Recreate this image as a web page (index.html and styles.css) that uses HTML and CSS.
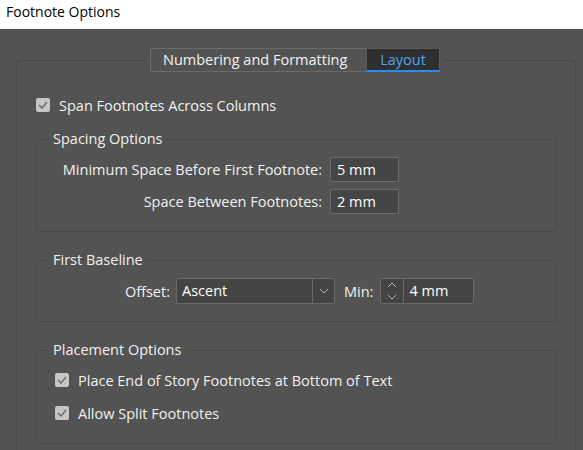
FILE: index.html
```html
<!DOCTYPE html>
<html lang="en">

<head>
  <meta charset="UTF-8">
  <meta name="viewport" content="width=device-width, initial-scale=1">
  <title>Footnote Options</title>
  <link rel="stylesheet" href="styles.css">
</head>

<body>

  <div class="titlebar">Footnote Options</div>

  <div class="dialog">
    <fieldset class="panel">
      <legend class="tabs">
        <span class="tab">Numbering and Formatting</span>
        <span class="tab active">Layout</span>
      </legend>

      <label class="check">
        <span class="box">
          <svg width="10" height="8" viewBox="0 0 10 8"><polyline points="1,4 4,7 9,1" /></svg>
        </span>
        Span Footnotes Across Columns
      </label>

      <!-- Spacing -->
      <fieldset class="group spacing">
        <legend>Spacing Options</legend>
        <div class="form-grid">
          <span class="lbl">Minimum Space Before First Footnote:</span>
          <span class="field">5 mm</span>
          <span class="lbl">Space Between Footnotes:</span>
          <span class="field">2 mm</span>
        </div>
      </fieldset>

      <!-- First baseline -->
      <fieldset class="group baseline">
        <legend>First Baseline</legend>
        <div class="offset-row">
          <span class="lbl offset-lbl">Offset:</span>
          <span class="select">
            <span class="select-value">Ascent</span>
            <span class="select-arrow">
              <svg width="10" height="6" viewBox="0 0 10 6"><polyline points="1,1 5,5 9,1" /></svg>
            </span>
          </span>
          <span class="lbl min-lbl">Min:</span>
          <span class="spin">
            <span class="spin-btns">
              <svg width="10" height="18" viewBox="0 0 10 18"><polyline points="1,5 5,1 9,5" /><polyline points="1,13 5,17 9,13" /></svg>
            </span>
            <span class="spin-value">4 mm</span>
          </span>
        </div>
      </fieldset>

      <!-- Placement -->
      <fieldset class="group placement">
        <legend>Placement Options</legend>
        <div class="check-list">
          <label class="check">
            <span class="box">
              <svg width="10" height="8" viewBox="0 0 10 8"><polyline points="1,4 4,7 9,1" /></svg>
            </span>
            Place End of Story Footnotes at Bottom of Text
          </label>
          <label class="check">
            <span class="box">
              <svg width="10" height="8" viewBox="0 0 10 8"><polyline points="1,4 4,7 9,1" /></svg>
            </span>
            Allow Split Footnotes
          </label>
        </div>
      </fieldset>
    </fieldset>
  </div>

</body>

</html>
```

FILE: styles.css
```css
* {
  box-sizing: border-box;
}

body {
  margin: 0;
  font-family: 'Open Sans', 'Noto Sans', sans-serif;
  font-size: 14.5px;
  color: #f0f0f0;
  background-color: #535353;
  height: 450px;
  overflow: hidden;
}

.titlebar {
  height: 29px;
  background-color: #ffffff;
  color: #000;
  padding: 0 6px;
  line-height: 24px;
  font-size: 14px;
}

.dialog {
  height: 421px;
  background-color: #535353;
  padding-top: 19px;
  overflow: hidden;
}

/* Outer panel with tabs */
.panel {
  margin: 0 7px 0 16px;
  padding: 23px 18px 40px 19px;
  border: 1px solid #484848;
  border-radius: 3px;
  min-width: 0;
}

.tabs {
  margin: 0 0 0 110px;
  padding: 0 4px;
  display: flex;
}

.tab {
  height: 24px;
  line-height: 22px;
  border: 1px solid #6a6a6a;
  color: #f2f2f2;
}

.tab:first-child {
  width: 216px;
  padding-left: 12px;
  border-right: none;
  border-radius: 2px 0 0 2px;
}

.tab.active {
  width: 74px;
  text-align: center;
  background-color: #2f2f2f;
  color: #4ea3f5;
  border-color: #5a5a5a;
  border-bottom: 2px solid #2d8ceb;
  border-radius: 0 2px 0 0;
}

/* Checkboxes */
.check {
  display: flex;
  align-items: center;
  gap: 9px;
  height: 20px;
}

.box {
  width: 14px;
  height: 14px;
  border-radius: 2px;
  background-color: #c6c6c6;
  display: flex;
  align-items: center;
  justify-content: center;
}

.box polyline {
  fill: none;
  stroke: #707070;
  stroke-width: 1.6;
}

/* Group boxes */
.group {
  margin: 0;
  padding: 0;
  border: 1px solid #4a4a4a;
  border-radius: 3px;
  min-width: 0;
}

.group legend {
  margin-left: 12px;
  padding: 0 4px;
  line-height: 18px;
}

.spacing {
  margin-top: 15px;
  padding: 9px 0 17px;
}

.baseline {
  margin-top: 19px;
  padding: 9px 0 17px;
}

.placement {
  margin-top: 19px;
  padding: 11px 0 20px;
}

.form-grid {
  display: grid;
  grid-template-columns: 285px 69px;
  column-gap: 8px;
  row-gap: 7px;
  align-items: center;
}

.lbl {
  text-align: right;
}

.field {
  height: 25px;
  line-height: 23px;
  padding-left: 6px;
  background-color: #454545;
  border: 1px solid #6a6a6a;
  border-radius: 2px;
  color: #ffffff;
}

.offset-row {
  display: flex;
  align-items: center;
  height: 26px;
}

.offset-lbl {
  width: 133px;
}

.select {
  display: flex;
  width: 159px;
  height: 26px;
  margin-left: 6px;
  background-color: #444444;
  border: 1px solid #6a6a6a;
  border-radius: 2px;
}

.select-value {
  flex: 1;
  line-height: 24px;
  padding-left: 5px;
  color: #ffffff;
}

.select-arrow {
  width: 22px;
  border-left: 1px solid #6a6a6a;
  display: flex;
  align-items: center;
  justify-content: center;
}

.select-arrow polyline,
.spin-btns polyline {
  fill: none;
  stroke: #b4b4b4;
  stroke-width: 1;
}

.min-lbl {
  margin-left: 9px;
}

.spin {
  display: flex;
  height: 26px;
  margin-left: 7px;
  border: 1px solid #6a6a6a;
  border-radius: 2px;
  background-color: #444444;
}

.spin-btns {
  width: 23px;
  border-right: 1px solid #6a6a6a;
  display: flex;
  align-items: center;
  justify-content: center;
}

.spin-value {
  width: 69px;
  line-height: 24px;
  padding-left: 5px;
  color: #ffffff;
}

.check-list {
  display: flex;
  flex-direction: column;
  gap: 13px;
  padding-left: 18px;
}
```
